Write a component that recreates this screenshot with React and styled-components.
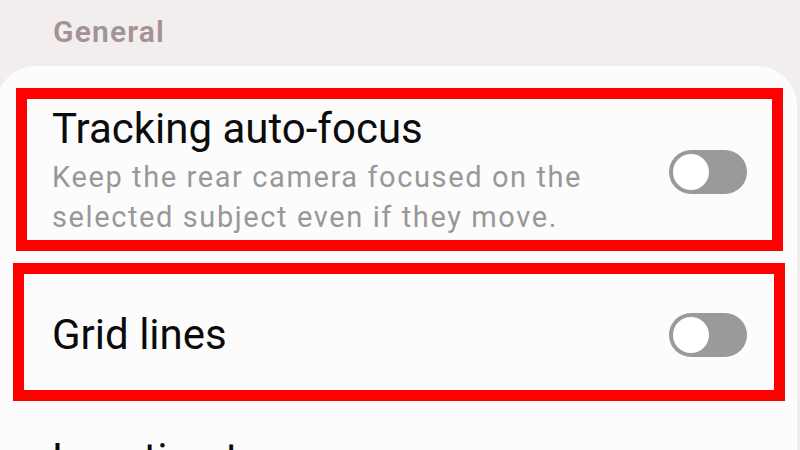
import React from "react";
import styled, { createGlobalStyle } from "styled-components";

const GlobalStyle = createGlobalStyle`
  html, body {
    margin: 0;
    padding: 0;
    background: #f2eeee;
  }
  body {
    font-family: Roboto, "Noto Sans", "Liberation Sans", sans-serif;
    overflow: hidden;
  }
`;

const Screen = styled.div`
  width: 800px;
  height: 450px;
  overflow: hidden;
  background: #f2eeee;
`;

const SectionTitle = styled.div`
  height: 66px;
  padding: 14px 0 0 53px;
  box-sizing: border-box;
  font-size: 30px;
  font-weight: 600;
  letter-spacing: 1.2px;
  color: #a39296;
  line-height: 36px;
`;

const Card = styled.div`
  margin: 0 3px 0 -4px;
  padding-top: 22px;
  background: #fdfcfd;
  border-radius: 40px 40px 0 0;
  min-height: 400px;
  box-sizing: border-box;
`;

/* each setting row; the red outline marks a highlighted row */
const Row = styled.div`
  display: flex;
  align-items: center;
  justify-content: space-between;
  border: 11px solid ${(p) => (p.$highlight ? "#ff0000" : "transparent")};
  margin: ${(p) => p.$margin || "0"};
  padding: ${(p) => p.$padding || "0"};
  min-height: ${(p) => p.$height || "auto"};
  box-sizing: border-box;
`;

const Texts = styled.div`
  display: flex;
  flex-direction: column;
`;

const Title = styled.div`
  font-size: 42px;
  color: #0b0b0b;
  line-height: 46px;
`;

const Subtitle = styled.div`
  font-size: 29px;
  letter-spacing: 1.6px;
  color: #999899;
  line-height: 40px;
  margin-top: 5px;
`;

const Track = styled.div`
  width: 78px;
  height: 44px;
  border-radius: 22px;
  background: #9a999b;
  display: flex;
  align-items: center;
  padding-left: 4px;
  box-sizing: border-box;
  flex-shrink: 0;
`;

const Knob = styled.div`
  width: 36px;
  height: 36px;
  border-radius: 50%;
  background: #ffffff;
`;

const Toggle = () => (
  <Track>
    <Knob />
  </Track>
);

export default function App() {
  return (
    <Screen>
      <GlobalStyle />
      <SectionTitle>General</SectionTitle>
      <Card>
        <Row
          $highlight
          $height="163px"
          $margin="0 14px 0 20px"
          $padding="7px 25px 3px 25px"
        >
          <Texts>
            <Title>Tracking auto-focus</Title>
            <Subtitle>
              Keep the rear camera focused on the
              <br />
              selected subject even if they move.
            </Subtitle>
          </Texts>
          <Toggle />
        </Row>
        <Row
          $highlight
          $height="138px"
          $margin="12px 12px 0 17px"
          $padding="5px 27px 0 28px"
        >
          <Texts>
            <Title>Grid lines</Title>
          </Texts>
          <Toggle />
        </Row>
        <Row $margin="24px 0 0 20px" $padding="0 0 0 25px">
          <Texts>
            <Title>Location tags</Title>
          </Texts>
        </Row>
      </Card>
    </Screen>
  );
}
